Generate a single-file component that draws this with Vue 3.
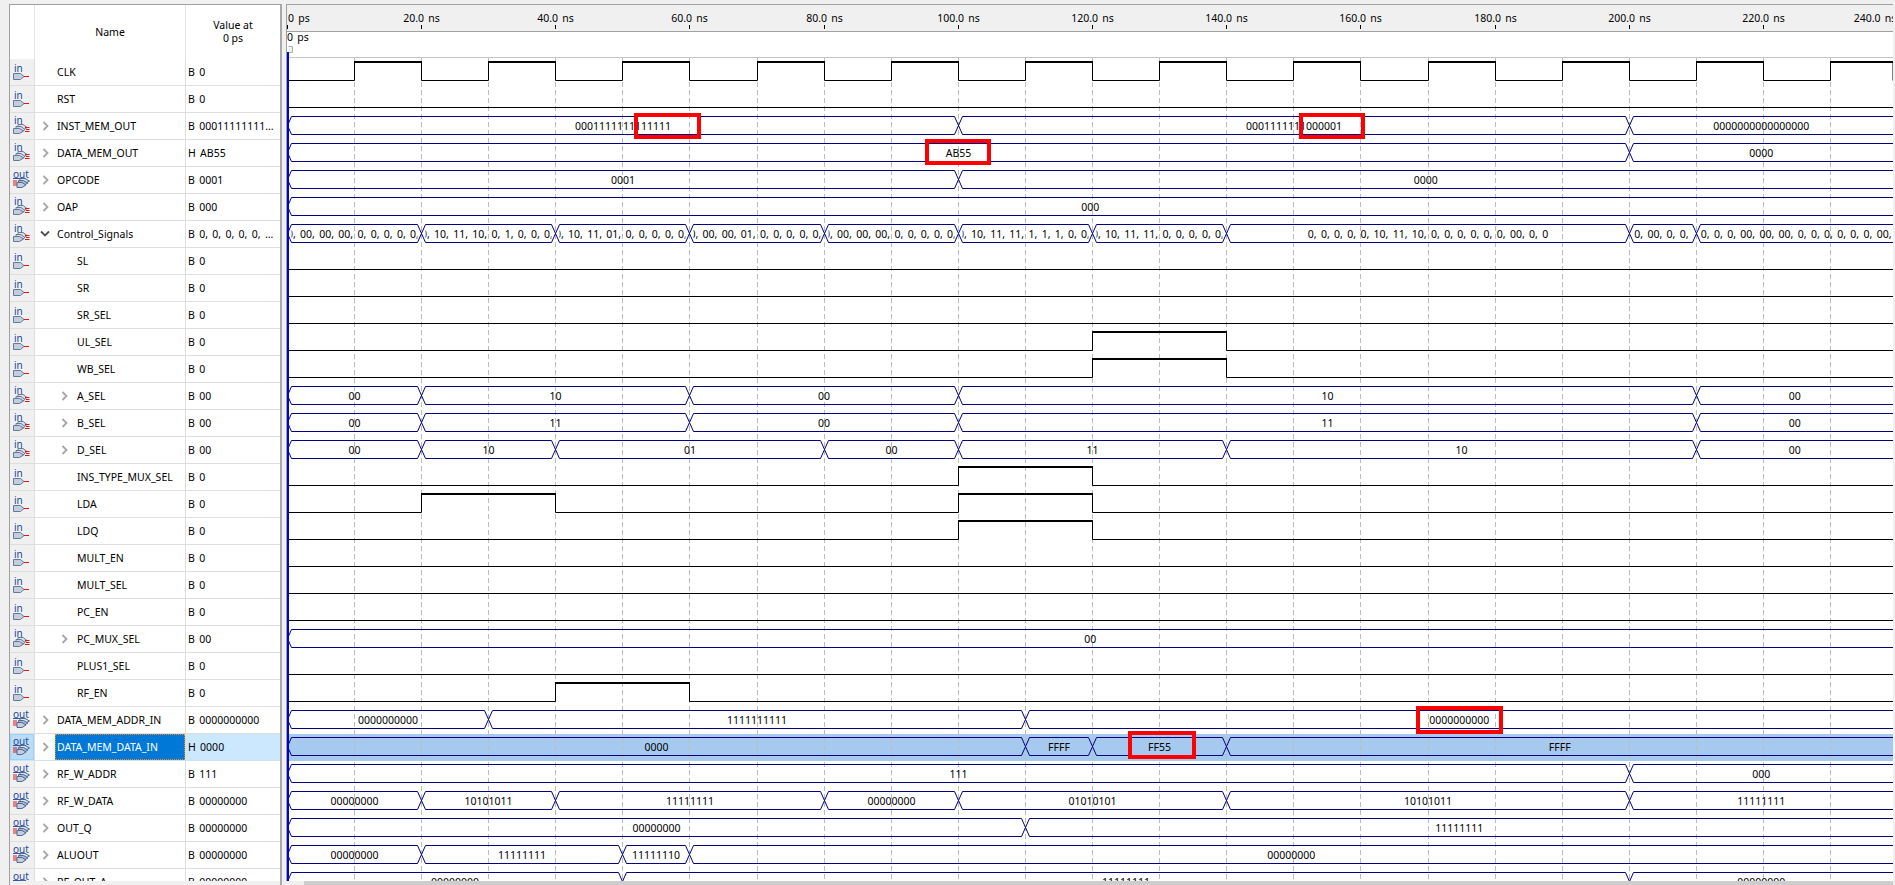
<script setup>
const ROW_H = 27
const FIRST_ROW = 59
const RIGHT = 1893
const xAt = (t) => Math.floor(287.3 + t * 6.71) + 0.5

const ctl = (a, b, d, rest) => `0, 0, 0, 0, 0, ${a}, ${b}, ${d}, ${rest}, 0, 0, 00, 0, 0`

const clockHighs = Array.from({ length: 12 }, (_, i) => [10 + i * 20, 20 + i * 20])

const signals = [
  { name: 'CLK', value: 'B 0', dir: 'in', high: clockHighs },
  { name: 'RST', value: 'B 0', dir: 'in', high: [] },
  { name: 'INST_MEM_OUT', value: 'B 00011111111...', dir: 'in', bus: [[0, '0001111111111111'], [100, '0001111111000001'], [200, '0000000000000000']] },
  { name: 'DATA_MEM_OUT', value: 'H AB55', dir: 'in', bus: [[0, 'AB55'], [200, '0000']] },
  { name: 'OPCODE', value: 'B 0001', dir: 'out', bus: [[0, '0001'], [100, '0000']] },
  { name: 'OAP', value: 'B 000', dir: 'in', bus: [[0, '000']] },
  { name: 'Control_Signals', value: 'B 0, 0, 0, 0, 0, ...', dir: 'in', open: true, bus: [
    [0, ctl('00', '00', '00', '0, 0, 0, 0')],
    [20, ctl('10', '11', '10', '0, 1, 0, 0')],
    [40, ctl('10', '11', '01', '0, 0, 0, 0')],
    [60, ctl('00', '00', '01', '0, 0, 0, 0')],
    [80, ctl('00', '00', '00', '0, 0, 0, 0')],
    [100, ctl('10', '11', '11', '1, 1, 1, 0')],
    [120, ctl('10', '11', '11', '0, 0, 0, 0')],
    [140, ctl('10', '11', '10', '0, 0, 0, 0')],
    [200, '0, 0, 0, 0, 0, 0, 0, 0, 00, 0, 0, 0, 0, 0, 0, 00, 0, 0'],
    [210, ctl('00', '00', '00', '0, 0, 0, 0')]
  ] },
  { name: 'SL', value: 'B 0', dir: 'in', child: true, high: [] },
  { name: 'SR', value: 'B 0', dir: 'in', child: true, high: [] },
  { name: 'SR_SEL', value: 'B 0', dir: 'in', child: true, high: [] },
  { name: 'UL_SEL', value: 'B 0', dir: 'in', child: true, high: [[120, 140]] },
  { name: 'WB_SEL', value: 'B 0', dir: 'in', child: true, high: [[120, 140]] },
  { name: 'A_SEL', value: 'B 00', dir: 'in', child: true, bus: [[0, '00'], [20, '10'], [60, '00'], [100, '10'], [210, '00']] },
  { name: 'B_SEL', value: 'B 00', dir: 'in', child: true, bus: [[0, '00'], [20, '11'], [60, '00'], [100, '11'], [210, '00']] },
  { name: 'D_SEL', value: 'B 00', dir: 'in', child: true, bus: [[0, '00'], [20, '10'], [40, '01'], [80, '00'], [100, '11'], [140, '10'], [210, '00']] },
  { name: 'INS_TYPE_MUX_SEL', value: 'B 0', dir: 'in', child: true, high: [[100, 120]] },
  { name: 'LDA', value: 'B 0', dir: 'in', child: true, high: [[20, 40], [100, 120]] },
  { name: 'LDQ', value: 'B 0', dir: 'in', child: true, high: [[100, 120]] },
  { name: 'MULT_EN', value: 'B 0', dir: 'in', child: true, high: [] },
  { name: 'MULT_SEL', value: 'B 0', dir: 'in', child: true, high: [] },
  { name: 'PC_EN', value: 'B 0', dir: 'in', child: true, high: [] },
  { name: 'PC_MUX_SEL', value: 'B 00', dir: 'in', child: true, bus: [[0, '00']] },
  { name: 'PLUS1_SEL', value: 'B 0', dir: 'in', child: true, high: [] },
  { name: 'RF_EN', value: 'B 0', dir: 'in', child: true, high: [[40, 60]] },
  { name: 'DATA_MEM_ADDR_IN', value: 'B 0000000000', dir: 'out', bus: [[0, '0000000000'], [30, '1111111111'], [110, '0000000000']] },
  { name: 'DATA_MEM_DATA_IN', value: 'H 0000', dir: 'out', selected: true, bus: [[0, '0000'], [110, 'FFFF'], [120, 'FF55'], [140, 'FFFF']] },
  { name: 'RF_W_ADDR', value: 'B 111', dir: 'out', bus: [[0, '111'], [200, '000']] },
  { name: 'RF_W_DATA', value: 'B 00000000', dir: 'out', bus: [[0, '00000000'], [20, '10101011'], [40, '11111111'], [80, '00000000'], [100, '01010101'], [140, '10101011'], [200, '11111111']] },
  { name: 'OUT_Q', value: 'B 00000000', dir: 'out', bus: [[0, '00000000'], [110, '11111111']] },
  { name: 'ALUOUT', value: 'B 00000000', dir: 'out', bus: [[0, '00000000'], [20, '11111111'], [50, '11111110'], [60, '00000000']] },
  { name: 'RF_OUT_A', value: 'B 00000000', dir: 'out', bus: [[0, '00000000'], [50, '11111111'], [200, '00000000']] }
]

const SLANT = 4

// one row of the diagram: either a 0/1 line or a chain of bus hexagons
const rows = signals.map((s, i) => {
  const top = FIRST_ROW + i * ROW_H
  const hi = top + 4
  const lo = top + 21.5
  const busTop = top + 3.5
  const mid = top + 12.5
  if (s.bus) {
    const segs = s.bus.map(([t, label], k) => {
      const a = xAt(t)
      const last = k === s.bus.length - 1
      const b = last ? RIGHT + 20 : xAt(s.bus[k + 1][0])
      const clipEnd = last ? RIGHT : b - SLANT
      return {
        label,
        d: `M${a} ${mid}L${a + SLANT} ${busTop}H${b - SLANT}L${b} ${mid}L${b - SLANT} ${lo}H${a + SLANT}Z`,
        x: a + SLANT,
        w: clipEnd - a - SLANT,
        cx: (a + (last ? RIGHT : b)) / 2 - a - SLANT,
        top: top + 4
      }
    })
    return { ...s, top, segs }
  }
  let low = `M288 ${lo}`
  let thick = ''
  s.high.forEach(([from, to]) => {
    const a = xAt(from)
    const b = Math.min(xAt(to), RIGHT)
    low += `H${a}V${hi}M${b} ${hi}V${lo}`
    thick += `M${a - 0.5} ${hi - 1}H${b + 0.5}`
  })
  low += `H${RIGHT}`
  return { ...s, top, low, thick }
})

const gridLines = Array.from({ length: 24 }, (_, i) => xAt((i + 1) * 10))
const rulerMarks = Array.from({ length: 12 }, (_, i) => ({
  label: `${(i + 1) * 20}.0 ns`,
  tick: xAt((i + 1) * 20),
  // the last label is pushed back so it stays on the ruler
  x: i === 11 ? 1875 : xAt((i + 1) * 20)
}))

const selectedTop = FIRST_ROW + 25 * ROW_H

// red marks somebody put on the screenshot
const marks = [
  { x: 634, y: 113, w: 67, h: 26 },
  { x: 1299, y: 113, w: 66, h: 26 },
  { x: 925, y: 139, w: 66, h: 26 },
  { x: 1416, y: 706, w: 87, h: 28 },
  { x: 1128, y: 731, w: 68, h: 28 }
]
</script>

<template>
  <main class="app">
    <section class="names">
      <div class="head">
        <div class="head-icon"></div>
        <div class="head-name">Name</div>
        <div class="head-value">Value at<br>0 ps</div>
      </div>
      <div class="list">
        <div v-for="s in signals" :key="s.name" class="row" :class="{ selected: s.selected }">
          <div class="icon-cell">
            <svg width="24" height="26" viewBox="0 0 24 26">
              <template v-if="s.dir === 'in' && !s.bus">
                <text class="pin-text" x="4" y="13">in</text>
                <path d="M3.5 14.5H10.5L14 17.5L10.5 20.5H3.5Z" fill="#c3cedc" stroke="#64789a" />
                <path d="M14 17.5H19" stroke="#e21414" />
              </template>
              <template v-else-if="s.dir === 'in'">
                <text class="pin-text" x="4" y="11">in</text>
                <path d="M8 11.5H13L17 14.5L13 17.5H8Z" fill="#dfe5ec" stroke="#64789a" />
                <path d="M6 13.5H11L15 16.5L11 19.5H6Z" fill="#cfd8e4" stroke="#64789a" />
                <path d="M3.5 15.5H9.5L13.5 18L9.5 20.5H3.5Z" fill="#c3cedc" stroke="#64789a" />
                <path d="M15 14.5H19.5M16 16.5H19.5M15 18.5H19.5" stroke="#e21414" />
              </template>
              <template v-else>
                <text class="pin-text" x="3" y="10.5">out</text>
                <path d="M3 11.5H16" stroke="#2f55a4" />
                <path d="M3 14H7M3 16H7M3 18H7" stroke="#e21414" />
                <path d="M10 11.5H15L19.5 14L15 16.5H10Z" fill="#dfe5ec" stroke="#4d6a96" />
                <path d="M8.5 13.5H13.5L18 16L13.5 18.5H8.5Z" fill="#a7b8cf" stroke="#4d6a96" />
                <path d="M7 15.5H12L16 18L12 20.5H7Z" fill="#c3cedc" stroke="#4d6a96" />
              </template>
            </svg>
          </div>
          <div class="name-cell" :class="{ child: s.child }">
            <span class="arrow">
              <svg v-if="s.open" width="10" height="8" viewBox="0 0 10 8">
                <path d="M1 1.5L5 5.5L9 1.5" fill="none" stroke="#505050" stroke-width="1.8" />
              </svg>
              <svg v-else-if="s.bus" width="7" height="10" viewBox="0 0 7 10">
                <path d="M1.5 1L5.5 5L1.5 9" fill="none" stroke="#a6a6a6" stroke-width="1.8" />
              </svg>
            </span>
            <span class="label">{{ s.name }}</span>
          </div>
          <div class="value-cell">{{ s.value }}</div>
        </div>
      </div>
      <div class="hscroll"></div>
    </section>

    <section class="wave">
      <svg class="canvas" width="1607" height="877" viewBox="286 4 1607 877">
        <rect x="286" y="5" width="1607" height="26" fill="#f0f0f0" />
        <rect x="286" y="32" width="1607" height="849" fill="#fff" />
        <path d="M286 4.5H1893" stroke="#a0a0a0" />
        <path d="M286 31.5H1893" stroke="#a0a0a0" />
        <path d="M286 57.5H1893" stroke="#c4c4c4" />
        <rect x="288" :y="selectedTop" width="1605" height="27" fill="#a6c9ef" />

        <path v-for="x in gridLines" :key="x" :d="`M${x} 58V881`" stroke="#bcbcbc" stroke-dasharray="5 3" />

        <text class="t" x="288" y="22">0 ps</text>
        <template v-for="m in rulerMarks" :key="m.label">
          <text class="t" :x="m.x" y="22" text-anchor="middle">{{ m.label }}</text>
          <path :d="`M${m.tick} 25V29`" stroke="#000" />
        </template>
        <path d="M287.5 25V29" stroke="#000" />
        <text class="t" x="287" y="41">0 ps</text>
        <path d="M288.5 46.5H292.5V52.5H288.5" fill="#f0f0f0" stroke="#b0b0b0" />

        <template v-for="r in rows" :key="r.name">
          <template v-if="r.segs">
            <template v-for="(s, k) in r.segs" :key="k">
              <path :d="s.d" fill="none" stroke="#000080" />
              <svg :x="s.x" :y="s.top" :width="s.w" height="20">
                <text class="t" :x="s.cx" y="13" text-anchor="middle">{{ s.label }}</text>
              </svg>
            </template>
          </template>
          <template v-else>
            <path :d="r.low" fill="none" stroke="#000" />
            <path v-if="r.thick" :d="r.thick" fill="none" stroke="#000" stroke-width="2" />
          </template>
        </template>

        <path d="M286.5 4V881" stroke="#a0a0a0" />
        <path d="M288 52V881" stroke="#0000d8" stroke-width="2" />

        <rect v-for="m in marks" :key="m.x" :x="m.x + 2" :y="m.y + 2" :width="m.w - 4" :height="m.h - 4" fill="none" stroke="#ff0000" stroke-width="4" />
      </svg>
      <div class="hscroll wave-scroll"><div class="thumb"></div></div>
    </section>
  </main>
</template>

<style>
html, body {
  margin: 0;
  background: #f0f0f0;
  overflow: hidden;
}
</style>

<style scoped>
.app {
  display: flex;
  gap: 4px;
  width: 1895px;
  height: 885px;
  padding: 4px 2px 0 9px;
  box-sizing: border-box;
  background: #f0f0f0;
  overflow: hidden;
  font-family: "Noto Sans", sans-serif;
  font-size: 10.5px;
  color: #000;
}

.names {
  display: flex;
  flex-direction: column;
  width: 273px;
  flex: none;
  box-sizing: border-box;
  background: #fff;
  border-left: 1px solid #a0a0a0;
  border-right: 2px solid #a8a8a8;
  border-top: 1px solid #a0a0a0;
}

.head {
  display: grid;
  grid-template-columns: 25px 151px 1fr;
  height: 54px;
  flex: none;
}

.head-icon,
.head-name {
  border-right: 1px solid #e4e4e4;
}

.head-name,
.head-value {
  display: flex;
  align-items: center;
  justify-content: center;
  text-align: center;
  line-height: 13px;
}

.list {
  flex: 1;
  overflow: hidden;
}

.row {
  display: grid;
  grid-template-columns: 25px 151px 1fr;
  height: 27px;
  box-sizing: border-box;
  border-bottom: 1px solid #dedede;
}

.icon-cell {
  background: #f0f0f0;
  border-right: 1px solid #dedede;
  height: 26px;
  box-sizing: border-box;
}

.icon-cell svg {
  display: block;
}

.pin-text {
  font-size: 10px;
  fill: #23479c;
}

.name-cell {
  display: flex;
  align-items: center;
  border-right: 1px solid #dedede;
  height: 26px;
  box-sizing: border-box;
}

.arrow {
  display: flex;
  align-items: center;
  justify-content: center;
  flex: none;
  width: 20px;
  height: 100%;
}

.child {
  padding-left: 20px;
}

.child .arrow {
  justify-content: flex-start;
  padding-left: 6px;
  box-sizing: border-box;
}

.label {
  flex: 1;
  padding-left: 2px;
  line-height: 26px;
  white-space: nowrap;
}

.value-cell {
  padding-left: 2px;
  line-height: 26px;
  white-space: nowrap;
  word-spacing: 1.6px;
}

.selected {
  border-bottom-color: #cde4f7;
}

.selected .icon-cell {
  background: #bcdcf4;
  box-shadow: inset 0 0 0 1px #99d1ff;
}

.selected .label {
  background: #0078d7;
  color: #fff;
  outline: 1px dotted #f08a24;
  outline-offset: -1px;
}

.selected .value-cell {
  background: #cce8ff;
}

.hscroll {
  height: 4px;
  flex: none;
  background: #f0f0f0;
}

.wave {
  display: flex;
  flex-direction: column;
  flex: 1;
  min-width: 0;
}

.canvas {
  display: block;
  flex: none;
}

.t {
  font-family: "Noto Sans", sans-serif;
  font-size: 10.5px;
  word-spacing: 1.6px;
  fill: #000;
}

.wave-scroll {
  display: flex;
}

.thumb {
  width: 100%;
  margin-left: 18px;
  background: #cdcdcd;
}
</style>
